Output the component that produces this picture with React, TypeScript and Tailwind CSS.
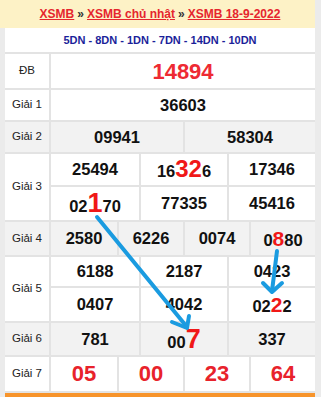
import React from 'react';

// "02[1]70" draws a large red digit, "16<32>6" a bigger one, "0{8}80" a mid-size one
function Num({ v, red = false }: { v: string; red?: boolean }) {
  const parts = v.split(/(\[[^\]]+\]|\{[^}]+\}|<[^>]+>)/).filter(Boolean);
  return (
    <span
      className={
        red
          ? 'text-[22px] font-bold text-[#e8222b] leading-none'
          : 'text-[16.5px] font-bold text-[#111] leading-none'
      }
    >
      {parts.map((p, i) =>
        p.startsWith('[') ? (
          <span key={i} className="text-[27px] font-bold text-[#f01818] leading-none">
            {p.slice(1, -1)}
          </span>
        ) : p.startsWith('<') ? (
          <span key={i} className="text-[24px] font-bold text-[#f01818] leading-none">
            {p.slice(1, -1)}
          </span>
        ) : p.startsWith('{') ? (
          <span key={i} className="text-[21px] font-bold text-[#f01818] leading-none">
            {p.slice(1, -1)}
          </span>
        ) : (
          <span key={i}>{p}</span>
        )
      )}
    </span>
  );
}

type RowProps = {
  label: string;
  cols: number;
  values: string[];
  h: string;
  gray?: boolean;
  red?: boolean;
};

function Row({ label, cols, values, h, gray, red }: RowProps) {
  const gridCols = cols === 1 ? 'grid-cols-1' : cols === 2 ? 'grid-cols-2' : cols === 3 ? 'grid-cols-3' : 'grid-cols-4';
  return (
    <div className={`flex border-b-2 border-[#e3e3e3] ${h} ${gray ? 'bg-[#f2f2f2]' : 'bg-white'}`}>
      <div className="w-[46px] shrink-0 flex items-center justify-center border-r-2 border-[#e3e3e3] text-[11.5px] text-[#222]">
        {label}
      </div>
      <div className={`flex-1 grid ${gridCols}`}>
        {values.map((v, i) => (
          <div
            key={i}
            className={`flex items-center justify-center ${i % cols !== 0 ? 'border-l-2 border-[#e3e3e3]' : ''} ${
              i >= cols ? 'border-t-2 border-[#e3e3e3]' : ''
            }`}
          >
            <Num v={v} red={red} />
          </div>
        ))}
      </div>
    </div>
  );
}

export default function App() {
  return (
    <div className="w-[321px] h-[397px] overflow-hidden bg-[#ebebeb]" style={{ fontFamily: '"Liberation Sans", Arial, sans-serif' }}>
      <div className="w-[315px]">
        <div className="h-[28px] bg-[#fdf2c6] flex items-center justify-center pl-[5px] text-[12px] font-bold">
          <a className="text-[#e5262e] underline">XSMB</a>
          <span className="text-[#333] mx-[3px]">»</span>
          <a className="text-[#e5262e] underline">XSMB chủ nhật</a>
          <span className="text-[#333] mx-[3px]">»</span>
          <a className="text-[#e5262e] underline">XSMB 18-9-2022</a>
        </div>

        <div className="ml-[5px] relative">
          <div className="h-[26px] bg-white border-b-2 border-[#e3e3e3] flex items-center justify-center text-[11px] font-bold text-[#1b1f9a]">
            5DN - 8DN - 1DN - 7DN - 14DN - 10DN
          </div>
          <div className="flex border-b-2 border-[#e3e3e3] h-[36px] bg-white">
            <div className="w-[46px] shrink-0 flex items-center justify-center border-r-2 border-[#e3e3e3] text-[11.5px] text-[#222]">
              ĐB
            </div>
            <div className="flex-1 flex items-center justify-center text-[22px] font-bold text-[#ee2a33]">14894</div>
          </div>
          <Row label="Giải 1" cols={1} values={['36603']} h="h-[32px]" />
          <Row label="Giải 2" cols={2} values={['09941', '58304']} h="h-[32px]" gray />
          <Row
            label="Giải 3"
            cols={3}
            values={['25494', '16<32>6', '17346', '02[1]70', '77335', '45416']}
            h="h-[68px]"
          />
          <Row label="Giải 4" cols={4} values={['2580', '6226', '0074', '0{8}80']} h="h-[35px]" gray />
          <Row
            label="Giải 5"
            cols={3}
            values={['6188', '2187', '0423', '0407', '4042', '02{2}2']}
            h="h-[66px]"
          />
          <Row label="Giải 6" cols={3} values={['781', '00[7]', '337']} h="h-[34px]" gray />
          <Row label="Giải 7" cols={4} values={['05', '00', '23', '64']} h="h-[36px]" red />
          <div className="h-[6px] bg-[#f7942b]" />

          {/* arrows drawn over the table */}
          <svg className="absolute left-[-5px] top-[-28px] pointer-events-none" width="321" height="397" viewBox="0 0 321 397">
            <g stroke="#1a9be0" strokeWidth="4" strokeLinecap="round" fill="none">
              <line x1="97" y1="217" x2="187" y2="327" />
              <polyline points="172,322 187,328 189,316" strokeLinejoin="round" />
              <line x1="277" y1="251" x2="272" y2="291" />
              <polyline points="263,283 272,292 282,283" strokeLinejoin="round" />
            </g>
          </svg>
        </div>
      </div>
    </div>
  );
}
